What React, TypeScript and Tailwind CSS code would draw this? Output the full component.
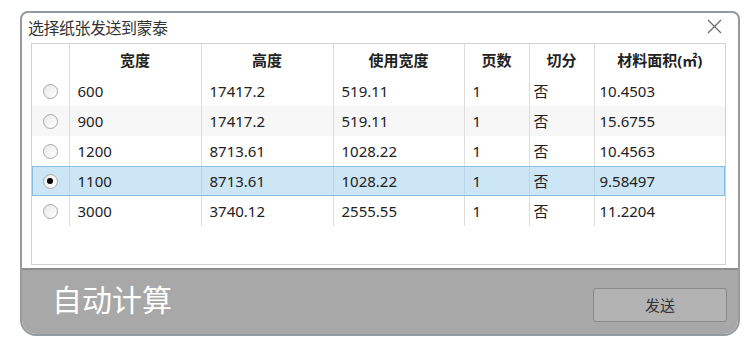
const rows = [
  { w: "600", h: "17417.2", uw: "519.11", p: "1", c: "否", a: "10.4503" },
  { w: "900", h: "17417.2", uw: "519.11", p: "1", c: "否", a: "15.6755" },
  { w: "1200", h: "8713.61", uw: "1028.22", p: "1", c: "否", a: "10.4563" },
  { w: "1100", h: "8713.61", uw: "1028.22", p: "1", c: "否", a: "9.58497" },
  { w: "3000", h: "3740.12", uw: "2555.55", p: "1", c: "否", a: "11.2204" },
];

const font = "font-['Noto_Sans','Noto_Sans_CJK_SC',sans-serif]";

const Radio = ({ checked }: { checked: boolean }) => (
  <div className="mx-auto w-[15px] h-[15px] rounded-full border border-[#a8a8a8] bg-gradient-to-br from-[#e9e9e9] to-white flex items-center justify-center">
    {checked && <div className="w-[6px] h-[6px] rounded-full bg-black"></div>}
  </div>
);

const App = () => {
  const selected = 3;

  return (
    <div className={`w-[756px] h-[347px] bg-white pt-[11px] pl-[20px] ${font}`}>
      <div className="w-[720px] h-[325px] border-2 border-[#959a9f] rounded-t-[8px] rounded-b-[16px] overflow-hidden flex flex-col bg-white">
        {/* title bar */}
        <div className="h-[30px] flex items-center justify-between pl-[6px] pr-[16px]">
          <span className="text-[16px] text-[#333] leading-none tracking-[-0.5px]">选择纸张发送到蒙泰</span>
          <svg width="15" height="15" viewBox="0 0 15 15" className="mb-[4px]">
            <path d="M1 1 L14 14 M14 1 L1 14" stroke="#6b6b6b" strokeWidth="1.3" fill="none" />
          </svg>
        </div>

        {/* table */}
        <div className="ml-[9px] w-[695px] h-[222px] border border-[#d2d2d2] bg-white">
          <table className="border-collapse table-fixed w-[693px] text-[15px] text-[#222]">
            <colgroup>
              <col className="w-[37px]" />
              <col className="w-[132px]" />
              <col className="w-[132px]" />
              <col className="w-[131px]" />
              <col className="w-[65px]" />
              <col className="w-[65px]" />
              <col className="w-[131px]" />
            </colgroup>
            <thead>
              <tr className="h-[32px] font-bold text-[15px]">
                <th className="border-r border-[#dedede]"></th>
                <th className="border-r border-[#dedede] font-bold">宽度</th>
                <th className="border-r border-[#dedede] font-bold">高度</th>
                <th className="border-r border-[#dedede] font-bold">使用宽度</th>
                <th className="border-r border-[#dedede] font-bold">页数</th>
                <th className="border-r border-[#dedede] font-bold">切分</th>
                <th className="font-bold">材料面积(㎡)</th>
              </tr>
            </thead>
            <tbody>
              {rows.map((r, i) => {
                const sel = i === selected;
                const rowCls = sel
                  ? "bg-[#cce6f6] outline outline-1 outline-[#86bde4] -outline-offset-1"
                  : i === 1
                  ? "bg-[#f7f7f7]"
                  : "";
                const td = sel ? "border-r border-[#b9d6ea] pl-[8px]" : "border-r border-[#dedede] pl-[8px]";
                return (
                  <tr key={r.w} className={`h-[30px] ${rowCls}`}>
                    <td className={sel ? "border-r border-[#b9d6ea]" : "border-r border-[#dedede]"}>
                      <Radio checked={sel} />
                    </td>
                    <td className={td}>{r.w}</td>
                    <td className={td}>{r.h}</td>
                    <td className={td}>{r.uw}</td>
                    <td className={td}>{r.p}</td>
                    <td className={`${td} !pl-[4px]`}>{r.c}</td>
                    <td className="pl-[5px]">{r.a}</td>
                  </tr>
                );
              })}
            </tbody>
          </table>
        </div>

        {/* bottom band */}
        <div className="mt-[3px] flex-1 border-t-2 border-[#8d8d8d] bg-[#a8a8a8] flex justify-between pl-[30px] pr-[11px]">
          <span className="text-[30px] text-white leading-none mt-[15px]">自动计算</span>
          <button className="mt-[18px] w-[134px] h-[34px] rounded-[3px] border border-[#8a8a8a] bg-[#b3b3b3] text-[15px] text-[#333]">
            发送
          </button>
        </div>
      </div>
    </div>
  );
};

export default App;
